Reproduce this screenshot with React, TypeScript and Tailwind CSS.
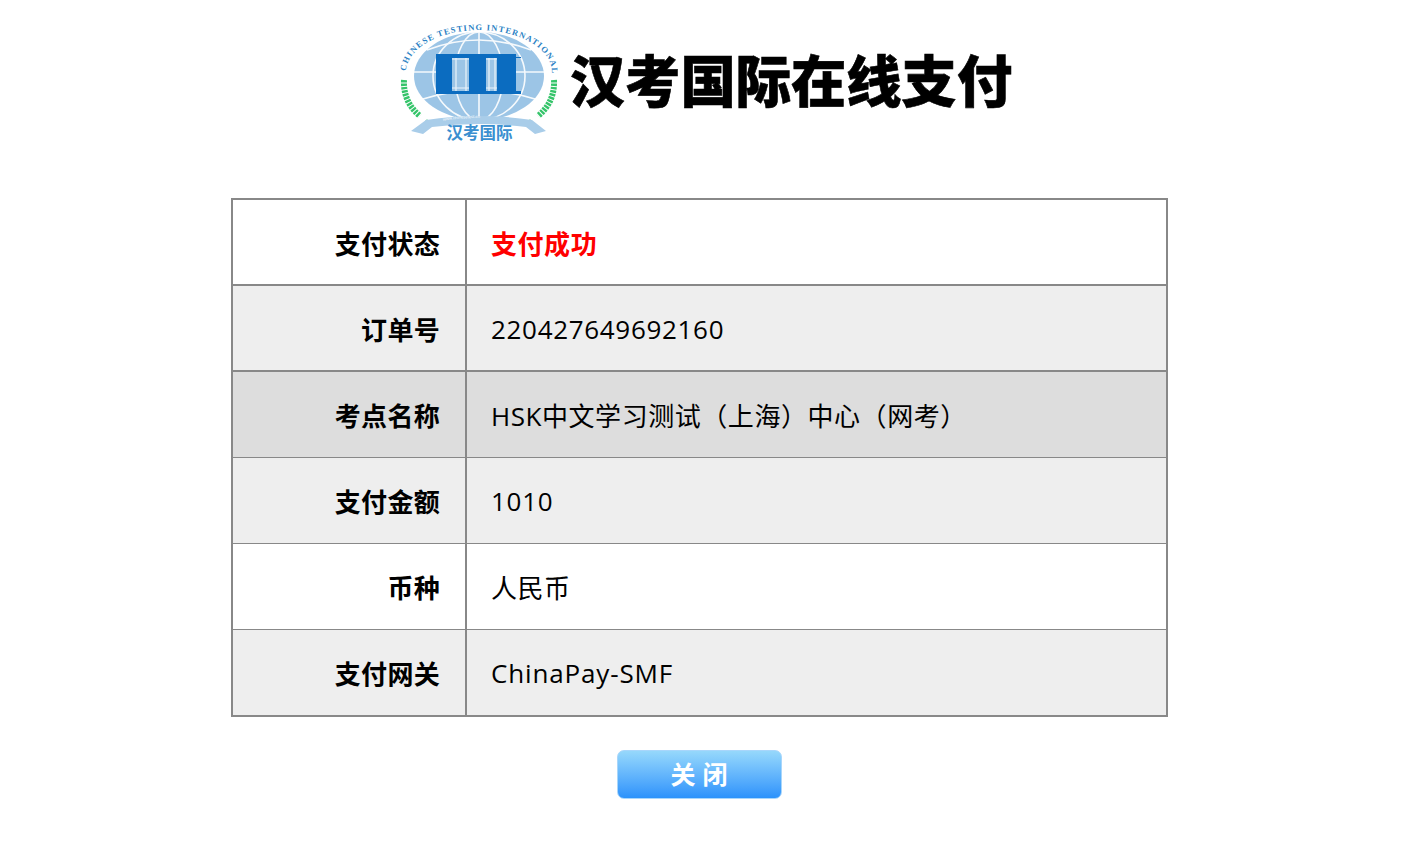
const rows = [
  { k: "支付状态", v: "支付成功", bg: "bg-white", line: "h-[86px] border-b-2", cls: "pt-[4px] tracking-[0.55px] text-[#ff0000] font-bold" },
  { k: "订单号", v: "220427649692160", bg: "bg-[#eeeeee]", line: "h-[86px] border-b-2", cls: "pt-[2px] tracking-[0.68px]" },
  { k: "考点名称", v: "HSK中文学习测试（上海）中心（网考）", bg: "bg-[#dddddd]", line: "h-[86px] border-b", cls: "pt-[4px] tracking-[0.55px]" },
  { k: "支付金额", v: "1010", bg: "bg-[#eeeeee]", line: "h-[86px] border-b", cls: "pt-[2px] tracking-[0.75px]" },
  { k: "币种", v: "人民币", bg: "bg-white", line: "h-[86px] border-b", cls: "pt-[4px] tracking-[0.55px]" },
  { k: "支付网关", v: "ChinaPay-SMF", bg: "bg-[#eeeeee]", line: "h-[85px]", cls: "pt-[2px] tracking-[0.85px]" },
];

function Logo() {
  return (
    <svg width="160" height="125" viewBox="401 20 160 125" className="shrink-0 overflow-visible">
      <defs>
        <path id="arc" d="M407 72 A73 42 0 0 1 553 72" fill="none" />
        <path id="www" d="M436 122 Q480 114 524 122" fill="none" />
      </defs>
      <ellipse cx="480" cy="76" rx="65" ry="44" fill="#9cc5e6" />
      <g fill="none" stroke="#ffffff" strokeWidth="1.6" opacity="0.9">
        <ellipse cx="480" cy="76" rx="24" ry="44" />
        <ellipse cx="480" cy="76" rx="46" ry="44" />
        <path d="M480 32V120" />
        <path d="M428 50Q480 30 532 50" />
        <path d="M415 72H545" />
        <path d="M424 99Q480 82 536 99" />
      </g>
      <path d="M437 54H517V57H522V58H517V91H522V94H437Z" fill="#0b6cc0" />
      <path d="M453 58H470V91H453ZM487 58H498V91H487Z" fill="#9cc5e6" />
      <path d="M453 59H470M453 88H470M487 59H498M487 88H498M457 58V91M467 58V91M490 58V91M496 58V91" stroke="#eaf3fb" strokeWidth="1.2" fill="none" />
      <text fontFamily="'Liberation Serif', serif" fontSize="8.4" fontWeight="700" fill="#2a7fc4">
        <textPath href="#arc" startOffset="1" textLength="184">CHINESE TESTING INTERNATIONAL</textPath>
      </text>
      <g fill="none" stroke="#35c46a">
        <path d="M405 80Q404 102 421 116" strokeWidth="6" strokeDasharray="2.4 1" />
        <path d="M555 80Q556 102 539 116" strokeWidth="6" strokeDasharray="2.4 1" />
      </g>
      <circle cx="428" cy="121" r="1.5" fill="#35c46a" />
      <circle cx="531" cy="121" r="1.5" fill="#35c46a" />
      <path d="M412 131L427 120Q480 112 533 120L547 131L536 134L527 127Q480 121 433 127L424 134Z" fill="#a9cde9" />
      <text fontFamily="'Open Sans', sans-serif" fontSize="4" fill="#ffffff">
        <textPath href="#www" startOffset="8">www.chinesetest.cn</textPath>
      </text>
      <text x="480.5" y="139" textAnchor="middle" fontFamily="'Noto Sans CJK SC', sans-serif" fontSize="16.5" fontWeight="700" fill="#3a8fd0">汉考国际</text>
    </svg>
  );
}

export default function App() {
  return (
    <div className="min-h-[844px] bg-white font-['Open_Sans','Noto_Sans_CJK_SC',sans-serif] text-black">
      <div className="flex justify-center items-center gap-[10px] pt-5 pl-[6px]">
        <Logo />
        <h1 className="-mt-[4px] text-[55.3px] leading-[62px] font-black text-black whitespace-nowrap [-webkit-text-stroke:0.6px_black]">汉考国际在线支付</h1>
      </div>
      <div className="mt-[53px] ml-[231px] w-[937px] border-2 border-[#888888]">
        {rows.map((r) => (
          <div key={r.k} className={`flex items-center ${r.bg} ${r.line} border-[#888888]`}>
            <div className="w-[234px] h-full flex items-center justify-end pr-[25px] pt-[4px] border-r-2 border-[#888888] text-[26px] font-bold tracking-[0.3px]">{r.k}</div>
            <div className={`pl-[24px] text-[26px] ${r.cls}`}>{r.v}</div>
          </div>
        ))}
      </div>
      <div className="flex justify-center mt-[33px] pr-[8px]">
        <button className="w-[165px] h-[49px] pl-[7px] rounded-[7px] border border-[#a8d6fb] bg-gradient-to-b from-[#96d8fb] to-[#2b92fb] text-white text-[25px] font-bold tracking-[7px] leading-none">关闭</button>
      </div>
    </div>
  );
}
